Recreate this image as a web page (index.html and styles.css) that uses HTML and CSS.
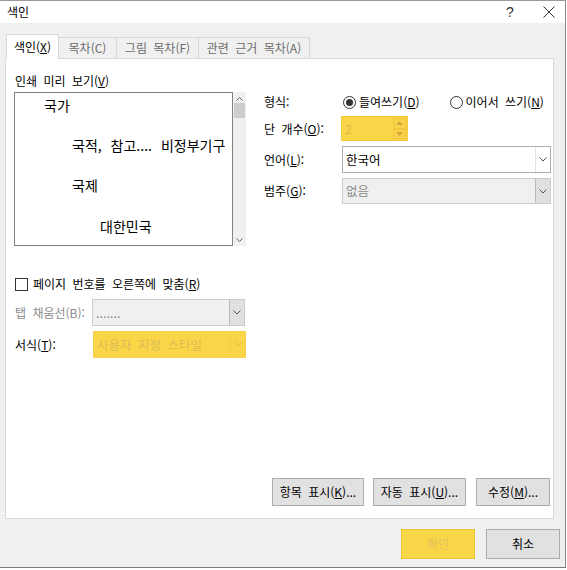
FILE: index.html
```html
<!DOCTYPE html>
<html lang="ko">
<head>
<meta charset="utf-8">
<title>색인</title>
<link rel="stylesheet" href="styles.css">
</head>
<body>
<div class="window">
  <div class="titlebar">
    <span class="title">색인</span>
    <span class="tb-help">?</span>
    <span class="tb-close">
      <svg width="12" height="12" viewBox="0 0 12 12"><path d="M0.5 0.5L11.5 11.5M11.5 0.5L0.5 11.5" stroke="#333" stroke-width="1" fill="none"/></svg>
    </span>
  </div>
  <div class="client">
    <div class="tabs">
      <div class="tab active">색인(<u>X</u>)</div>
      <div class="tab t2">목차(C)</div>
      <div class="tab t3">그림 목차(F)</div>
      <div class="tab t4">관련 근거 목차(A)</div>
    </div>
    <div class="panel">
      <div class="top">
        <div class="left">
          <div class="label">인쇄 미리 보기(<u>V</u>)</div>
          <div class="preview">
            <div class="preview-box">
              <div class="pv l1">국가</div>
              <div class="pv l2">국적, 참고.... 비정부기구</div>
              <div class="pv l3">국제</div>
              <div class="pv l4">대한민국</div>
            </div>
            <div class="scrollbar">
              <svg class="sb-arrow" width="7" height="4" viewBox="0 0 7 4"><path d="M0.5 3.5L3.5 0.5L6.5 3.5" stroke="#606060" fill="none"/></svg>
              <div class="sb-thumb"></div>
              <div class="sb-fill"></div>
              <svg class="sb-arrow" width="7" height="4" viewBox="0 0 7 4"><path d="M0.5 0.5L3.5 3.5L6.5 0.5" stroke="#606060" fill="none"/></svg>
            </div>
          </div>
        </div>
        <div class="right">
          <div class="row r-format">
            <span class="rlabel">형식:</span>
            <span class="radio checked"><span class="dot"></span></span>
            <span class="rtext">들여쓰기(<u>D</u>)</span>
            <span class="radio r2"></span>
            <span class="rtext">이어서 쓰기(<u>N</u>)</span>
          </div>
          <div class="row r-cols">
            <span class="rlabel">단 개수(<u>O</u>):</span>
            <div class="spinner">
              <span class="spin-val">2</span>
              <div class="spin-btns">
                <div class="spin-btn"><svg width="7" height="4" viewBox="0 0 7 4"><path d="M0 4L3.5 0L7 4Z" fill="#c9a93a"/></svg></div>
                <div class="spin-btn"><svg width="7" height="4" viewBox="0 0 7 4"><path d="M0 0L3.5 4L7 0Z" fill="#c9a93a"/></svg></div>
              </div>
            </div>
          </div>
          <div class="row r-lang">
            <span class="rlabel">언어(<u>L</u>):</span>
            <div class="combo">
              <span class="combo-val">한국어</span>
              <span class="combo-btn"><svg width="8" height="5" viewBox="0 0 8 5"><path d="M0.5 0.5L4 4L7.5 0.5" stroke="#555" fill="none"/></svg></span>
            </div>
          </div>
          <div class="row r-cat">
            <span class="rlabel">범주(<u>G</u>):</span>
            <div class="combo disabled">
              <span class="combo-val">없음</span>
              <span class="combo-btn"><svg width="8" height="5" viewBox="0 0 8 5"><path d="M0.5 0.5L4 4L7.5 0.5" stroke="#555" fill="none"/></svg></span>
            </div>
          </div>
        </div>
      </div>
      <div class="lower">
        <div class="check-row">
          <span class="checkbox"></span>
          <span>페이지 번호를 오른쪽에 맞춤(<u>R</u>)</span>
        </div>
        <div class="row lrow tabfill">
          <span class="llabel dim">탭 채움선(B):</span>
          <div class="combo disabled small">
            <span class="combo-val dots">.......</span>
            <span class="combo-btn"><svg width="8" height="5" viewBox="0 0 8 5"><path d="M0.5 0.5L4 4L7.5 0.5" stroke="#555" fill="none"/></svg></span>
          </div>
        </div>
        <div class="row lrow style">
          <span class="llabel">서식(<u>T</u>):</span>
          <div class="combo hl small">
            <span class="combo-val">사용자 지정 스타일</span>
            <span class="combo-btn"><svg width="8" height="5" viewBox="0 0 8 5"><path d="M0.5 0.5L4 4L7.5 0.5" stroke="#d8b845" fill="none"/></svg></span>
          </div>
        </div>
      </div>
      <div class="spacer"></div>
      <div class="actions">
        <button class="btn b1">항목 표시(<u>K</u>)...</button>
        <button class="btn b2">자동 표시(<u>U</u>)...</button>
        <button class="btn b3">수정(<u>M</u>)...</button>
      </div>
    </div>
    <div class="footer">
      <button class="btn fbtn ok">확인</button>
      <button class="btn fbtn">취소</button>
    </div>
  </div>
</div>
</body>
</html>
```
FILE: styles.css
```css
* { box-sizing: border-box; }
html, body { margin: 0; padding: 0; background: #ffffff; }
body {
  font-family: "Noto Sans CJK KR", "Noto Sans", sans-serif;
  font-size: 12px;
  line-height: 16px;
  word-spacing: 3px;
  color: #000;
  width: 567px;
  height: 570px;
  overflow: hidden;
}
u { text-decoration: underline; text-underline-offset: 1px; }
.window {
  width: 566px;
  height: 568px;
  border-top: 1px solid #9a9a9a;
  border-right: 1px solid #8a8a8a;
  border-bottom: 1px solid #7a7a7a;
  display: flex;
  flex-direction: column;
}
.titlebar {
  height: 22px;
  background: #fff;
  display: flex;
  align-items: center;
  padding-left: 7px;
  flex-shrink: 0;
}
.title { flex: 1; font-size: 12px; }
.tb-help { width: 12px; font-family: "Liberation Sans", sans-serif; font-size: 14px; color: #333; margin-right: 25px; }
.tb-close { width: 12px; height: 12px; display: flex; margin-right: 10px; }
.client {
  flex: 1;
  background: #f0f0f0;
  display: flex;
  flex-direction: column;
  padding-top: 11px;
}
.tabs { display: flex; align-items: flex-end; margin-left: 6px; height: 24px; position: relative; z-index: 1; }
.tab {
  height: 21px;
  border: 1px solid #d9d9d9;
  border-bottom: none;
  border-left: none;
  background: #f0f0f0;
  color: #6d6d6d;
  display: flex;
  align-items: center;
  justify-content: center;
  font-size: 12px;
}
.tab.active {
  width: 53px;
  background: #fff;
  color: #000;
  border-left: 1px solid #d9d9d9;
  margin-bottom: -1px;
  height: 25px;
}
.tab.t2 { width: 58px; }
.tab.t3 { width: 82px; }
.tab.t4 { width: 111px; }
.panel {
  margin-left: 5px;
  width: 549px;
  height: 461px;
  background: #fff;
  border: 1px solid #d9d9d9;
  display: flex;
  flex-direction: column;
  padding: 14px 2px 12px 8px;
}
.top { display: flex; }
.left { width: 232px; }
.label { height: 16px; padding-left: 1px; }
.preview { display: flex; margin-top: 3px; height: 154px; }
.preview-box {
  width: 219px;
  border: 1px solid #828282;
  padding-top: 2px;
  font-size: 14px;
  line-height: 20px;
  word-spacing: 5px;
  white-space: nowrap;
}
.pv { height: 20px; }
.l1 { padding-left: 29px; }
.l2 { padding-left: 57px; margin-top: 20px; }
.l3 { padding-left: 57px; margin-top: 20px; }
.l4 { padding-left: 85px; margin-top: 21px; }
.scrollbar {
  width: 13px;
  background: #f0f0f0;
  display: flex;
  flex-direction: column;
  align-items: center;
  padding: 5px 0 4px;
}
.sb-arrow { flex-shrink: 0; }
.sb-thumb { width: 11px; height: 15px; background: #cdcdcd; margin-top: 2px; }
.sb-fill { flex: 1; }
.right { margin-left: 18px; flex: 1; padding-top: 21px; }
.row { display: flex; align-items: center; }
.rlabel { width: 78px; flex-shrink: 0; }
.r-format { height: 16px; }
.radio {
  width: 13px; height: 13px;
  border: 1px solid #333;
  border-radius: 50%;
  display: flex;
  align-items: center;
  justify-content: center;
  margin-left: 1px;
  margin-right: 3px;
}
.radio .dot { width: 7px; height: 7px; border-radius: 50%; background: #333; }
.radio.r2 { margin-left: 30px; }
.r-cols { margin-top: 6px; height: 25px; }
.spinner {
  width: 67px;
  height: 25px;
  margin-left: -1px;
  background: #fbd548;
  border: 1px solid #f0c838;
  display: flex;
  align-items: center;
  justify-content: space-between;
  padding-left: 3px;
}
.spin-val { color: #d9b84a; font-size: 12px; }
.spin-btns { display: flex; flex-direction: column; width: 13px; height: 21px; margin-right: 1px; }
.spin-btn {
  flex: 1;
  display: flex;
  align-items: center;
  justify-content: center;
  background: #fad24a;
  border: 1px solid #f1c73e;
}
.r-lang { margin-top: 5px; }
.r-cat { margin-top: 5px; }
.combo {
  width: 209px;
  height: 27px;
  border: 1px solid #adadad;
  background: #fff;
  display: flex;
  align-items: center;
  justify-content: space-between;
}
.r-cat .combo { height: 26px; }
.combo-val { padding-left: 3px; font-size: 12.5px; }
.combo-btn {
  width: 15px;
  height: 100%;
  display: flex;
  align-items: center;
  justify-content: center;
  border-left: 1px solid #e3e3e3;
}
.combo.disabled { background: #f0f0f0; border-color: #cccccc; }
.combo.disabled .combo-val { color: #8a8a8a; }
.combo.disabled .combo-btn { background: #e0e0e0; border-left: 1px solid #b9b9b9; }
.lower { margin-top: 30px; }
.check-row { display: flex; align-items: center; height: 16px; padding-left: 1px; }
.checkbox { width: 13px; height: 13px; border: 1px solid #333; background: #fff; margin-right: 5px; }
.lrow { padding-left: 1px; }
.llabel { width: 77px; flex-shrink: 0; }
.llabel.dim { color: #8a8a8a; }
.tabfill { margin-top: 7px; }
.style { margin-top: 5px; }
.combo.small { width: 153px; }
.combo.hl { background: #fbd548; border-color: #f6d04c; margin-left: 1px; }
.combo.hl .combo-val { color: #dcbd58; }
.combo.hl .combo-btn { border-left: 1px solid #f4cd45; }
.spacer { flex: 1; }
.actions { display: flex; justify-content: flex-end; gap: 9px; padding-right: 1px; }
.btn {
  font-family: "Noto Sans CJK KR", "Noto Sans", sans-serif;
  font-size: 12px;
  line-height: 16px;
  word-spacing: 3px;
  height: 28px;
  background: #e1e1e1;
  border: 1px solid #adadad;
  color: #000;
  padding: 0;
  margin: 0;
}
.b1 { width: 92px; }
.b2 { width: 93px; margin-right: 1px; }
.b3 { width: 74px; }
.footer { display: flex; justify-content: flex-end; gap: 11px; padding-top: 10px; padding-right: 5px; }
.fbtn { width: 74px; height: 30px; }
.fbtn.ok { background: #f9d548; border: 1px solid #e9c535; color: #e3c25c; }
```
